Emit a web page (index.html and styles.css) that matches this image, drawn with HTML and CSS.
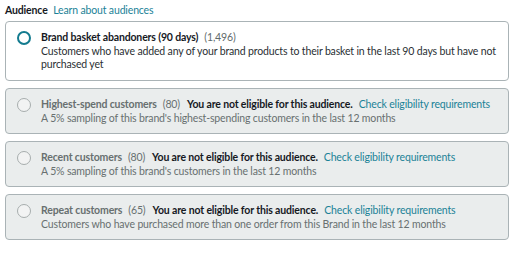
FILE: index.html
```html
<!DOCTYPE html>
<html>
<head>
	<meta charset="utf-8">
	<title>Audience</title>
	<link rel="stylesheet" href="styles.css">
</head>
<body>
<div class="audience">
	<div class="audience-hd">
		<span class="label">Audience</span>
		<a href="#" class="link">Learn about audiences</a>
	</div>
	<div class="option selected">
		<span class="radio"></span>
		<div class="text">
			<div class="title"><b>Brand basket abandoners (90 days)</b><span class="count">(1,496)</span></div>
			<div class="desc">Customers who have added any of your brand products to their basket in the last 90 days but have not purchased yet</div>
		</div>
	</div>
	<div class="option disabled">
		<span class="radio"></span>
		<div class="text">
			<div class="title"><b>Highest-spend customers</b><span class="count">(80)</span><strong>You are not eligible for this audience.</strong><a href="#" class="link">Check eligibility requirements</a></div>
			<div class="desc">A 5% sampling of this brand's highest-spending customers in the last 12 months</div>
		</div>
	</div>
	<div class="option disabled">
		<span class="radio"></span>
		<div class="text">
			<div class="title"><b>Recent customers</b><span class="count">(80)</span><strong>You are not eligible for this audience.</strong><a href="#" class="link">Check eligibility requirements</a></div>
			<div class="desc">A 5% sampling of this brand's customers in the last 12 months</div>
		</div>
	</div>
	<div class="option disabled">
		<span class="radio"></span>
		<div class="text">
			<div class="title"><b>Repeat customers</b><span class="count">(65)</span><strong>You are not eligible for this audience.</strong><a href="#" class="link">Check eligibility requirements</a></div>
			<div class="desc">Customers who have purchased more than one order from this Brand in the last 12 months</div>
		</div>
	</div>
</div>
</body>
</html>
```

FILE: styles.css
```css
* {
	margin: 0;
	padding: 0;
	box-sizing: border-box;
}
body {
	font-family: "Lato", "Liberation Sans", sans-serif;
	font-size: 10.5px;
	letter-spacing: -0.15px;
	color: #16191f;
	background: #fff;
}
.audience {
	padding: 2px 12px 0 5px;
}
.audience-hd {
	line-height: 16px;
	margin-bottom: 3px;
}
.audience-hd .label {
	font-weight: 700;
	margin-right: 3px;
}
.link {
	color: #1a8297;
	text-decoration: none;
}
.option {
	display: flex;
	align-items: flex-start;
	border: 1px solid #aab3b6;
	border-radius: 4px;
	background: #fff;
	padding: 8px 10px 8px 11px;
	margin-bottom: 7px;
}
.option.selected {
	padding-bottom: 9px;
}
.radio {
	flex: none;
	width: 14px;
	height: 14px;
	margin-top: 1px;
	margin-right: 10px;
	border: 2px solid #137b8f;
	border-radius: 50%;
	background: #fff;
}
.title {
	line-height: 15px;
}
.title b {
	font-weight: 700;
}
.count {
	color: #5f6b6b;
	margin-left: 6px;
}
.title strong {
	font-weight: 700;
	color: #16191f;
	margin-left: 7px;
}
.title .link {
	margin-left: 6px;
}
.desc {
	line-height: 13px;
	color: #2a2f33;
}
.option.disabled {
	background: #eaeded;
}
.disabled .radio {
	border: 1px solid #a7adad;
	background: #f2f3f3;
}
.disabled .title b,
.disabled .count,
.disabled .desc {
	color: #687070;
}
```
